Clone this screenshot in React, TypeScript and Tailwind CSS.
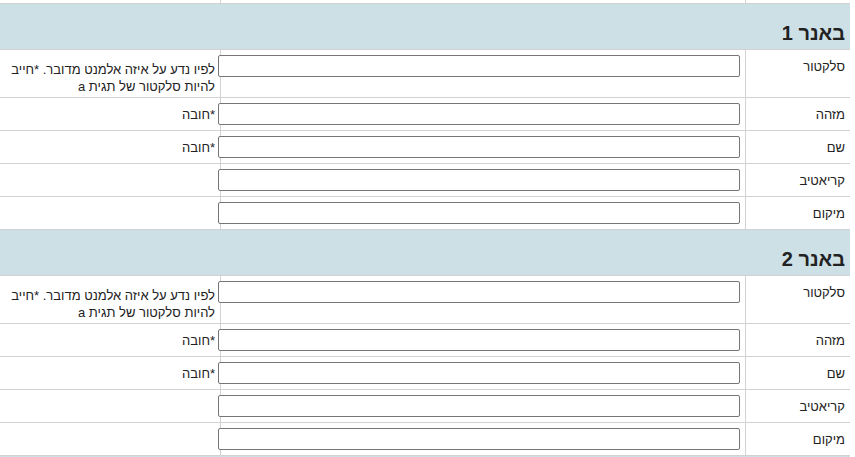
import React from "react";

const fields = [
  { label: "סלקטור", note: "לפיו נדע על איזה אלמנט מדובר. *חייב להיות סלקטור של תגית a", tall: true },
  { label: "מזהה", note: "*חובה" },
  { label: "שם", note: "*חובה" },
  { label: "קריאטיב", note: "" },
  { label: "מיקום", note: "" },
];

function FieldRow({ label, note, tall }: { label: string; note: string; tall?: boolean }) {
  return (
    <div
      className={`grid grid-cols-[105px_525px_220px] border-b border-[#d2d2d2] ${
        tall ? "h-[48px]" : "h-[33px]"
      }`}
    >
      <div className="border-l border-[#d2d2d2] pr-[5px] pt-[6px] leading-[22px] text-[13px] text-[#222]">
        {label}
      </div>
      <div className="border-l border-[#d2d2d2] pr-[5px] pt-[5px]">
        <input
          type="text"
          className="block h-[22px] w-[522px] rounded-[2px] border border-[#767676] bg-white outline-none"
        />
      </div>
      <div
        className={`pr-[5px] text-[13px] text-[#222] ${
          tall ? "pt-[11px] leading-[17px]" : "pt-[6px] leading-[22px]"
        }`}
      >
        {note}
      </div>
    </div>
  );
}

function Banner({ n }: { n: number }) {
  return (
    <>
      <div className="flex h-[46px] items-end border-b border-[#d2d2d2] bg-[#cde0e6] pb-[4px] pr-[5px]">
        <h2 className="text-[20px] font-bold leading-[24px] text-[#222]">באנר {n}</h2>
      </div>
      {fields.map((f) => (
        <FieldRow key={f.label} {...f} />
      ))}
    </>
  );
}

export default function App() {
  return (
    <div className="h-[457px] w-[855px] overflow-hidden bg-white" style={{ fontFamily: '"Liberation Sans", Arial, sans-serif' }}>
      <div dir="rtl" className="w-[850px]">
        <div className="grid h-[4px] grid-cols-[105px_525px_220px] border-b border-[#d2d2d2]">
          <div className="border-l border-[#d2d2d2]" />
          <div className="border-l border-[#d2d2d2]" />
          <div />
        </div>
        <Banner n={1} />
        <Banner n={2} />
        <div className="h-[40px] bg-[#cde0e6]" />
      </div>
    </div>
  );
}
